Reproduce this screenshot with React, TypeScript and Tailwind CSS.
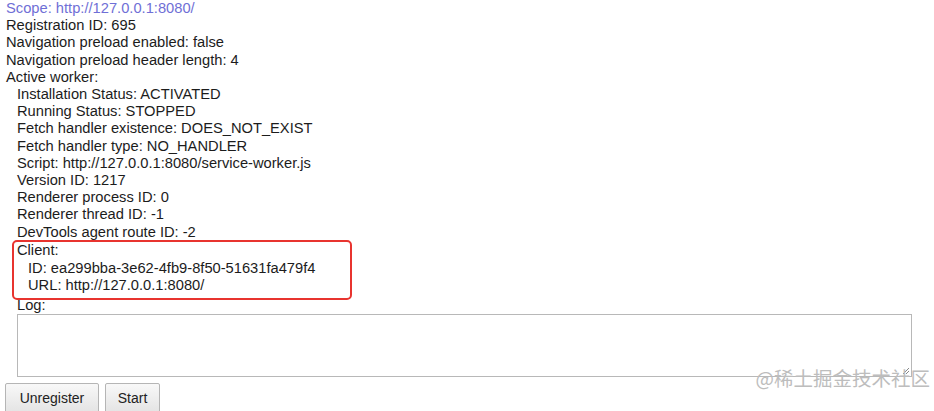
import React from 'react';

const workerRows = [
  'Installation Status: ACTIVATED',
  'Running Status: STOPPED',
  'Fetch handler existence: DOES_NOT_EXIST',
  'Fetch handler type: NO_HANDLER',
  'Script: http://127.0.0.1:8080/service-worker.js',
  'Version ID: 1217',
  'Renderer process ID: 0',
  'Renderer thread ID: -1',
  'DevTools agent route ID: -2',
];

export default function App() {
  return (
    <div className="relative h-[411px] w-[934px] overflow-hidden bg-white font-['Liberation_Sans',Arial,sans-serif] text-[14.7px] leading-[17.2px] text-[#1c1c1c]">
      <div className="pl-[6px]">
        <div className="text-[#6f6fd6]">Scope: http://127.0.0.1:8080/</div>
        <div>Registration ID: 695</div>
        <div>Navigation preload enabled: false</div>
        <div>Navigation preload header length: 4</div>
        <div>Active worker:</div>
        <div className="pl-[11px]">
          {workerRows.map((row) => (
            <div key={row}>{row}</div>
          ))}
          <div className="relative pt-[1.5px]">
            <div>Client:</div>
            <div className="pl-[11px]">
              <div>ID: ea299bba-3e62-4fb9-8f50-51631fa479f4</div>
              <div>URL: http://127.0.0.1:8080/</div>
            </div>
            <span className="pointer-events-none absolute -left-[5px] -top-[1px] h-[60px] w-[340px] rounded-[5px] border-[2.5px] border-[#e8342f]" />
          </div>
          <div className="mt-[3px]">Log:</div>
          <div className="relative mt-[0px] h-[63px] w-[895px] border border-[#b8b8b8] bg-white">
            <svg className="absolute bottom-[1px] right-[1px]" width="8" height="8" viewBox="0 0 8 8">
              <path d="M7 1 L1 7 M7 4 L4 7" stroke="#888" strokeWidth="1" />
            </svg>
          </div>
        </div>
        <div className="mt-[6px] flex gap-[6px] -ml-[1px]">
          <button className="h-[30px] w-[94px] rounded-[2px] border border-[#b5b5b5] bg-gradient-to-b from-[#f8f8f8] to-[#e4e4e4] text-[14px] text-[#222]">
            Unregister
          </button>
          <button className="h-[30px] w-[55px] rounded-[2px] border border-[#b5b5b5] bg-gradient-to-b from-[#f8f8f8] to-[#e4e4e4] text-[14px] text-[#222]">
            Start
          </button>
        </div>
      </div>
      <div className="pointer-events-none absolute right-[4px] top-[365px] font-['Noto_Sans_CJK_SC',sans-serif] text-[19.5px] leading-[26px] text-[#bdbdbd]">
        @稀土掘金技术社区
      </div>
    </div>
  );
}
